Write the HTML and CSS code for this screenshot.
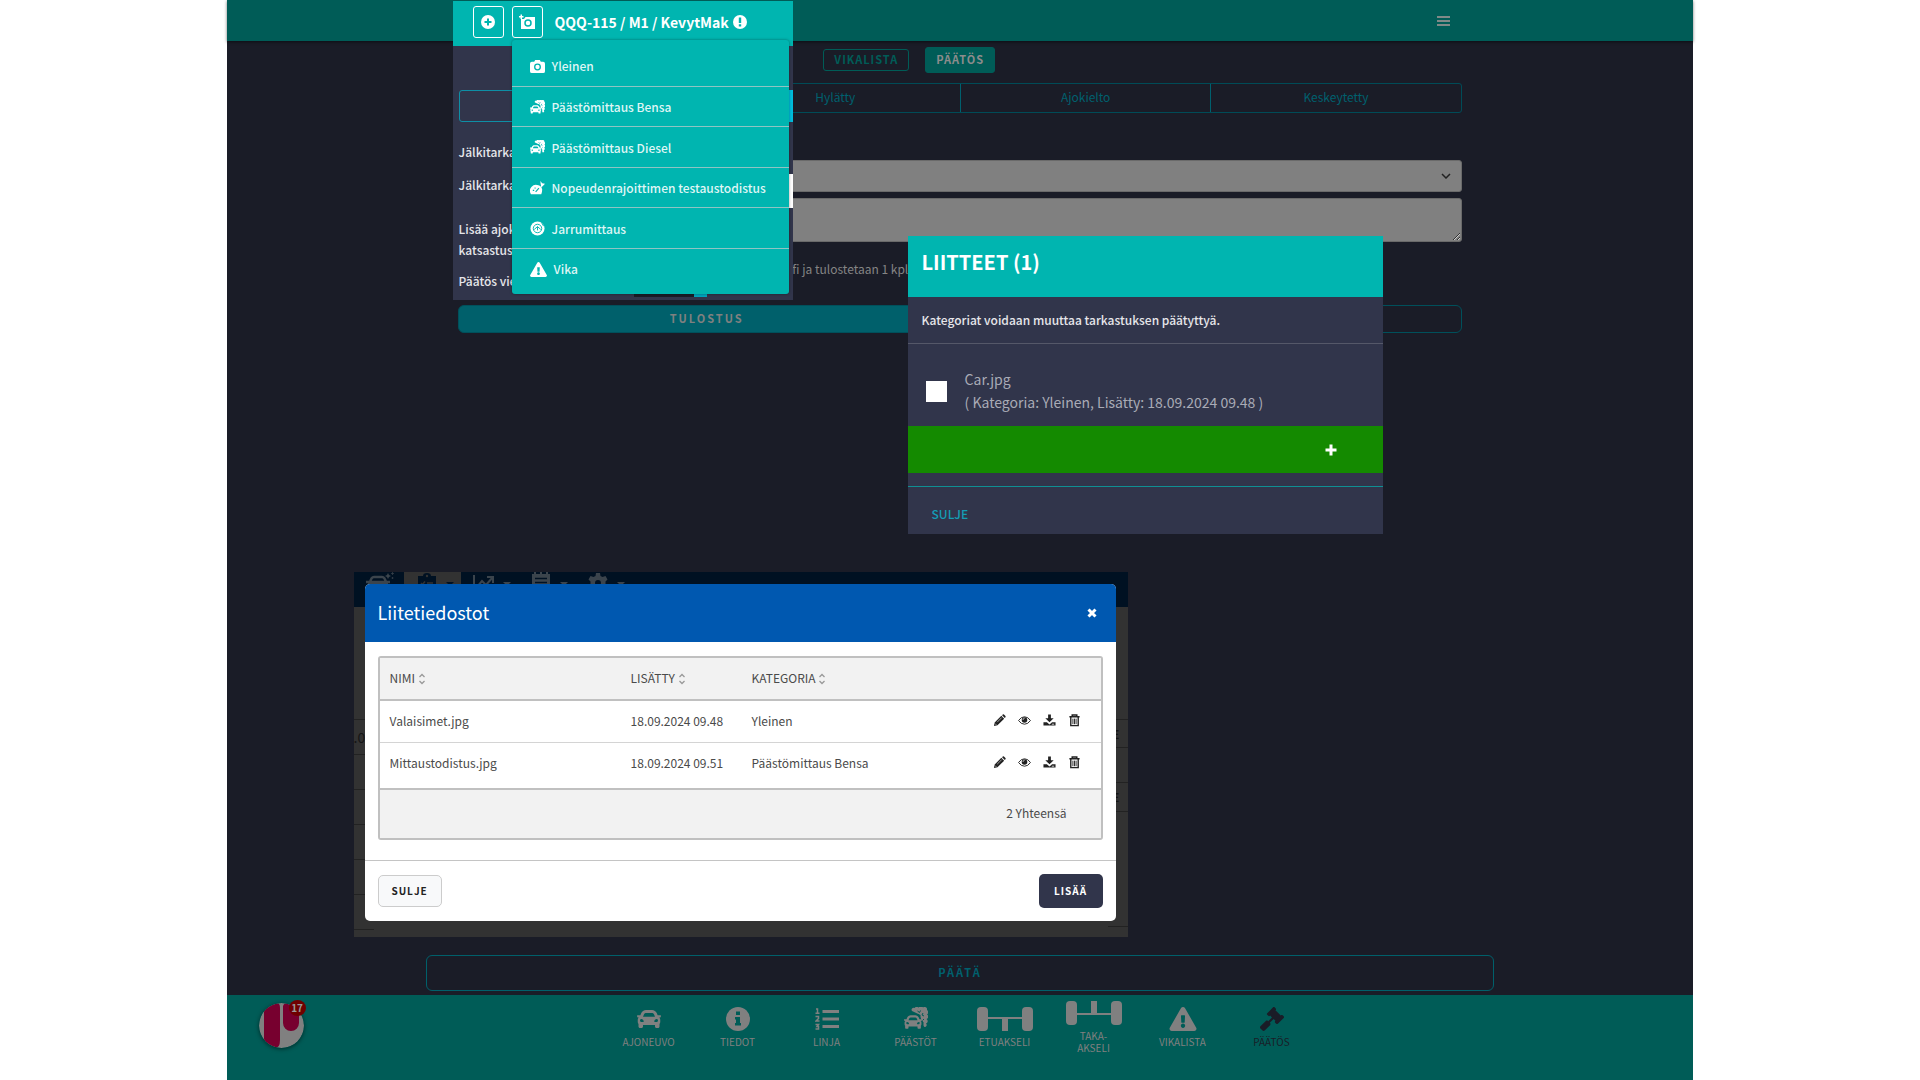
FILE: index.html
```html
<!DOCTYPE html>
<html lang="fi">
<head>
<meta charset="utf-8">
<meta name="viewport" content="width=device-width, initial-scale=1">
<title>Katsastus – Päätös</title>
<link rel="stylesheet" href="styles.css">
</head>
<body>
<svg class="sprite" aria-hidden="true">
  <symbol id="car" viewBox="0 0 512 512"><path d="M499.99 176h-59.87l-16.64-41.6C406.38 91.63 365.57 64 319.5 64h-127c-46.06 0-86.88 27.63-103.99 70.4L71.87 176H12.01C4.2 176-1.53 183.34.37 190.91l6 24C7.7 220.25 12.5 224 18.01 224h20.07C24.65 235.73 16 252.78 16 272v48c0 16.12 6.16 30.67 16 41.93V416c0 17.67 14.33 32 32 32h32c17.67 0 32-14.33 32-32v-32h256v32c0 17.67 14.33 32 32 32h32c17.67 0 32-14.33 32-32v-54.07c9.84-11.25 16-25.8 16-41.93v-48c0-19.22-8.65-36.27-22.07-48H494c5.51 0 10.31-3.75 11.64-9.09l6-24c1.89-7.57-3.84-14.91-11.65-14.91zm-352.06-17.83c7.29-18.22 24.94-30.17 44.57-30.17h127c19.63 0 37.28 11.95 44.57 30.17L384 208H128l19.93-49.83zM96 319.8c-19.2 0-32-12.76-32-31.9S76.8 256 96 256s48 28.71 48 47.85-28.8 15.95-48 15.95zm320 0c-19.2 0-48 3.19-48-15.95S396.8 256 416 256s32 12.76 32 31.9-12.8 31.9-32 31.9z"/></symbol>
  <symbol id="smog" viewBox="0 0 24 24"><path d="M8 4a2 2 0 0 1 2.500-3 2.500 2.500 0 0 1 4-.3 2.500 2.500 0 0 1 4.500-.2 2.500 2.500 0 0 1 4 2.500 2.800 2.800 0 0 1 0 4.500 2.500 2.500 0 0 1-.5 4.500 2.500 2.500 0 0 1-.5 4.500 2 2 0 0 1-1.500 3.500l-4-4V8z"/><path d="M13.500 4l2 1.500 1-2M19 6l-1 2 2 1M20 12l-1.500 1.500" stroke="var(--cut)" fill="none"/><path d="M3 14l2.500-6.500h9L17.500 14l1.500 1v6" fill="var(--cut)" stroke="var(--cut)"/><use href="#car" x="0" y="5" width="18" height="20"/></symbol>
  <symbol id="warning" viewBox="0 0 576 512"><path d="M569.517 440.013C587.975 472.007 564.806 512 527.94 512H48.054c-36.937 0-59.999-40.055-41.577-71.987L246.423 23.985c18.467-32.009 64.72-31.951 83.154 0l239.94 416.028zM288 354c-25.405 0-46 20.595-46 46s20.595 46 46 46 46-20.595 46-46-20.595-46-46-46zm-43.673-165.346l7.418 136c.347 6.364 5.609 11.346 11.982 11.346h48.546c6.373 0 11.635-4.982 11.982-11.346l7.418-136c.375-6.874-5.098-12.654-11.982-12.654h-63.383c-6.884 0-12.356 5.78-11.981 12.654z"/></symbol>
  <symbol id="pencil" viewBox="0 0 14 14"><path d="M1 13l.8-3.800L9 2l3 3-7.200 7.200zM9.800 1.300l.7-.7q.7-.5 1.300 0l1.600 1.600q.5.700 0 1.300l-.7.700z"/><path d="M2.200 10.300l1.500 1.500M4.500 8.800L9.500 3.800" stroke="var(--cut)" stroke-width=".6"/></symbol>
  <symbol id="eye" viewBox="0 0 14 14"><path d="M.6 7Q3.200 3 7 3t6.400 4Q10.800 11 7 11T.6 7z" fill="none" stroke="currentColor"/><circle cx="7" cy="6.500" r="3"/><path d="M5.300 6.300A1.800 1.800 0 0 1 7 4.700" stroke="var(--cut)" stroke-width=".8" fill="none"/></symbol>
  <symbol id="download" viewBox="0 0 14 14"><path d="M5.500.5h3v4h3L7 9 2.500 4.500h3zM.5 9h3.700L7 11.200 9.800 9h3.700v3.500H.5z"/><path d="M9.500 11h2.500" stroke="var(--cut)" stroke-width=".8"/></symbol>
  <symbol id="trash" viewBox="0 0 14 14"><path d="M4.500 2.500V1h5v1.500M1.500 3h11M3 3.500v9h8v-9" fill="none" stroke="currentColor" stroke-width="1.500"/><path d="M5.300 5v6M7 5v6M8.700 5v6" stroke="currentColor" stroke-width="1"/></symbol>
  <symbol id="sort" viewBox="0 0 8 12"><path d="M1.500 4L4 1.500 6.500 4M1.500 8L4 10.500 6.500 8" fill="none" stroke="currentColor" stroke-width="1.300"/></symbol>
</svg>

<div class="stage">
  <header class="topbar">
    <button class="menu-button" type="button" aria-label="Valikko"><span></span><span></span><span></span></button>
  </header>

  <main class="content">
    <div class="decision">
      <nav class="tabs">
        <button class="tab" type="button">VIKALISTA</button>
        <button class="tab tab-active" type="button">PÄÄTÖS</button>
      </nav>
      <div class="segments">
        <button type="button" aria-label="Hyväksytty"></button>
        <button type="button">Hylätty</button>
        <button type="button">Ajokielto</button>
        <button type="button">Keskeytetty</button>
      </div>
      <div class="fields">
        <select class="field" aria-label="Jälkitarkastus"></select>
        <textarea class="field" aria-label="Lisätiedot"></textarea>
      </div>
      <p class="print-note">fi ja tulostetaan 1 kpl</p>
      <div class="print-actions">
        <button class="print-button print-main" type="button">TULOSTUS</button>
        <button class="print-button" type="button" aria-label="Lähetä"></button>
      </div>
    </div>
    <button class="finish" type="button">PÄÄTÄ</button>
  </main>

  <footer class="bottombar">
    <a class="brand" href="#" aria-label="Etusivu">
      <svg viewBox="0 0 45 45"><defs><clipPath id="disc"><circle cx="22.500" cy="22.500" r="22.500"/></clipPath></defs><g clip-path="url(#disc)"><path fill="#808080" d="M0 0h45v45H0z"/><path fill="#77002f" d="M5 0h13q3 0 3 5v32q0 8-5 8H5zM24 3q1-3 4-3h12v20a8 8 0 0 1-16 0z"/></g></svg>
      <span class="count">17</span>
    </a>
    <nav class="steps">
      <a href="#"><svg class="icon-24" viewBox="0 0 512 512"><use href="#car"/></svg>AJONEUVO</a>
      <a href="#"><svg class="icon-24" viewBox="0 0 24 24"><circle cx="12" cy="12" r="12"/><path fill="#005c57" d="M10 4.500h4v3.500h-4zM9 10h5v6h1v2.500H9V16h1v-3.500H9z"/></svg>TIEDOT</a>
      <a href="#"><svg class="icon-24" viewBox="0 0 24 24"><path d="M7.500 3H24v3H7.500zM7.500 10.500H24v3H7.500zM7.500 18H24v3H7.500z"/><path fill="none" stroke="currentColor" stroke-width="1.500" d="M1 2h1.500V6M.5 6.300h4M.5 9.500h3v2l-2.500 2.500h3.500M.5 17.500h3L2 19.500h1.500v2.500h-3"/></svg>LINJA</a>
      <a href="#"><svg class="icon-24"><use href="#smog"/></svg>PÄÄSTÖT</a>
      <a href="#"><svg class="axle" viewBox="0 0 56 24"><rect width="11" height="24" rx="4"/><rect x="45" width="11" height="24" rx="4"/><path d="M10 10h36v2H10zM25 11h6v13h-6z"/></svg>ETUAKSELI</a>
      <a class="rear" href="#"><svg class="axle" viewBox="0 0 56 24"><rect width="11" height="24" rx="4"/><rect x="45" width="11" height="24" rx="4"/><path d="M10 12h36v2H10zM25 0h6v13h-6z"/></svg><span>TAKA-<br>AKSELI</span></a>
      <a href="#"><svg class="icon-27"><use href="#warning"/></svg>VIKALISTA</a>
      <a class="current" href="#"><svg class="icon-24" viewBox="0 0 512 512"><path d="M504.971 199.362l-22.627-22.627c-9.373-9.373-24.569-9.373-33.941 0l-5.657 5.657L329.608 69.255l5.657-5.657c9.373-9.373 9.373-24.569 0-33.941L312.638 7.029c-9.373-9.373-24.569-9.373-33.941 0L154.246 131.480c-9.373 9.373-9.373 24.569 0 33.941l22.627 22.627c9.373 9.373 24.569 9.373 33.941 0l5.657-5.657 39.598 39.598-81.040 81.040-5.657-5.657c-12.497-12.497-32.758-12.497-45.255 0L9.373 412.118c-12.497 12.497-12.497 32.758 0 45.255l45.255 45.255c12.497 12.497 32.758 12.497 45.255 0l114.745-114.745c12.497-12.497 12.497-32.758 0-45.255l-5.657-5.657 81.040-81.040 39.598 39.598-5.657 5.657c-9.373 9.373-9.373 24.569 0 33.941l22.627 22.627c9.373 9.373 24.569 9.373 33.941 0l124.451-124.451c9.372-9.372 9.372-24.568 0-33.941z"/></svg>PÄÄTÖS</a>
    </nav>
  </footer>

  <!-- Vehicle panel with the photo category menu -->
  <section class="vehicle">
    <div class="vehicle-head">
      <button class="head-button" type="button" aria-label="Lisää"><svg viewBox="0 0 14 14"><circle cx="7" cy="7" r="7"/><path stroke="#00b5b0" stroke-width="2" d="M7 3.500v7M3.500 7h7"/></svg></button>
      <button class="head-button" type="button" aria-label="Lisää kuva"><svg class="icon-16" viewBox="0 0 16 16"><path d="M2 5h3l1.500-2H16v12H2zM0 2h1.500V.5H3V2h1.500v1.500H3V5H1.500V3.500H0z"/><circle cx="9" cy="9" r="3" fill="none" stroke="#00b5b0" stroke-width="1.500"/></svg></button>
      <h1>QQQ-115 / M1 / KevytMak <svg viewBox="0 0 14 14"><circle cx="7" cy="7" r="7"/><path fill="#00b5b0" d="M5.800 2.500h2.400v5.500H5.800zM5.800 9.200h2.400v2.300H5.800z"/></svg></h1>
    </div>
    <div class="vehicle-body">
      <div class="result"><span></span><span class="chosen"></span></div>
      <p>Jälkitarka</p>
      <p class="with-field">Jälkitarka<span class="white-field"></span></p>
      <p class="spaced">Lisää ajok<br>katsastus</p>
      <p class="spaced">Päätös vie</p>
      <div class="language"><span></span><span class="chosen"></span></div>
    </div>
    <ul class="photo-menu">
      <li><a href="#"><svg viewBox="0 0 16 16"><path d="M2 3h2.500l1-2h5l1 2H14q2 0 2 2v8q0 2-2 2H2q-2 0-2-2V5q0-2 2-2z"/><circle cx="8" cy="8.500" r="3" fill="none" stroke="#00b5b0" stroke-width="1.400"/></svg>Yleinen</a></li>
      <li><a href="#"><svg><use href="#smog"/></svg>Päästömittaus Bensa</a></li>
      <li><a href="#"><svg><use href="#smog"/></svg>Päästömittaus Diesel</a></li>
      <li><a href="#"><svg viewBox="0 0 16 16"><path d="M1 14a6.500 6.500 0 0 1 8-9.500q3 .5 4 4.500 0 3-1 5zM11 0l2 2.500 3 .5-1.500 1.500L12 7l-.5-3z"/><path stroke="#00b5b0" stroke-width="1.200" fill="none" d="M6 11.500l3.500-4M3 10h1.500M5 7l.8 1"/></svg>Nopeudenrajoittimen testaustodistus</a></li>
      <li><a href="#"><svg viewBox="0 0 16 16"><circle cx="8" cy="8" r="7.500"/><circle cx="8" cy="8" r="4.500" fill="none" stroke="#00b5b0"/><path stroke="#00b5b0" fill="none" d="M4.500 9L8 6l3.500 3M8 6v4M12.500 2l2 3.500"/></svg>Jarrumittaus</a></li>
      <li><a href="#"><svg class="wide"><use href="#warning"/></svg>Vika</a></li>
    </ul>
  </section>

  <!-- Attachments dialog -->
  <section class="attachments">
    <h2>LIITTEET (1)</h2>
    <p class="hint">Kategoriat voidaan muuttaa tarkastuksen päätyttyä.</p>
    <label class="file"><input type="checkbox"><span>Car.jpg<br>( Kategoria: Yleinen, Lisätty: 18.09.2024 09.48 )</span></label>
    <button class="add-file" type="button" aria-label="Lisää liite"><svg viewBox="0 0 12 12"><path d="M4.500.5h3v4h4v3h-4v4h-3v-4h-4v-3h4z"/></svg></button>
    <div class="attachments-foot"><button type="button">SULJE</button></div>
  </section>

  <!-- Office view with the attachment list on top -->
  <section class="office">
    <div class="office-bar">
      <span class="office-tool"><svg class="office-car" viewBox="0 0 28 24"><path fill="none" stroke="currentColor" stroke-width="2.500" d="M4 11q1-6 4-6h8q3 0 4 6M0 10h24"/><path d="M2 10h20v10H2zM22 1l1 2 2 1-2 1-1 2-1-2-2-1 2-1z"/><path d="M26.500 0v3M25 1.500h3M26.500 5v2M25.500 6h2" stroke="currentColor" stroke-width=".7"/></svg></span>
      <span class="office-tool office-open"><svg viewBox="0 0 22 24"><path d="M2 4h5q0-3 4-3t4 3h5v19H2z"/><path fill="none" stroke="#323232" stroke-width="1.500" d="M5 11l1.500 1.500L9 9.500M11 11h6"/><circle cx="11" cy="4" r="1.200" fill="#323232"/></svg><i></i></span>
      <span class="office-tool"><svg viewBox="0 0 22 24"><path fill="none" stroke="currentColor" stroke-width="2" d="M1 3v18h20M4 15l5-6 4 4 7-8M14 5h6v6"/></svg><i></i></span>
      <span class="office-tool"><svg viewBox="0 0 22 24"><path d="M2 2h2V0h2v2h4V0h2v2h4V0h2v2h2v22H2z"/><path stroke="#001122" stroke-width="1.500" d="M5 6.500h12M5 10.500h12"/></svg><i></i></span>
      <span class="office-tool"><svg viewBox="0 0 22 24"><path d="M9 1h4l.5 3 2 1 3-1 2 3.500-2 2v3l2 2-2 3.500-3-1-2 1-.5 3H9l-.5-3-2-1-3 1-2-3.500 2-2v-3l-2-2L3.500 4l3 1 2-1z"/><circle cx="11" cy="11" r="3" fill="#001122"/></svg><i></i></span>
    </div>
    <div class="office-body">
      <div class="office-left"><span></span><span>.0</span><span></span><span></span><span></span><span></span><span></span></div>
      <div class="office-right"><span></span><span>E</span><span></span><span>E</span><span></span></div>
    </div>

    <div class="dialog">
      <div class="dialog-head">
        <h2>Liitetiedostot</h2>
        <button type="button" aria-label="Sulje"><svg viewBox="0 0 10 10"><path stroke="currentColor" stroke-width="3" d="M1.500 1.500l7 7M8.500 1.500l-7 7"/></svg></button>
      </div>
      <div class="dialog-body">
        <table class="files">
          <thead>
            <tr><th>NIMI <svg><use href="#sort"/></svg></th><th>LISÄTTY <svg><use href="#sort"/></svg></th><th>KATEGORIA <svg><use href="#sort"/></svg></th><th></th></tr>
          </thead>
          <tbody>
            <tr><td>Valaisimet.jpg</td><td>18.09.2024 09.48</td><td>Yleinen</td><td><div class="row-tools"><button type="button" aria-label="Muokkaa"><svg><use href="#pencil"/></svg></button><button type="button" aria-label="Näytä"><svg><use href="#eye"/></svg></button><button type="button" aria-label="Lataa"><svg><use href="#download"/></svg></button><button type="button" aria-label="Poista"><svg><use href="#trash"/></svg></button></div></td></tr>
            <tr><td>Mittaustodistus.jpg</td><td>18.09.2024 09.51</td><td>Päästömittaus Bensa</td><td><div class="row-tools"><button type="button" aria-label="Muokkaa"><svg><use href="#pencil"/></svg></button><button type="button" aria-label="Näytä"><svg><use href="#eye"/></svg></button><button type="button" aria-label="Lataa"><svg><use href="#download"/></svg></button><button type="button" aria-label="Poista"><svg><use href="#trash"/></svg></button></div></td></tr>
          </tbody>
          <tfoot>
            <tr><td colspan="4">2 Yhteensä</td></tr>
          </tfoot>
        </table>
      </div>
      <div class="dialog-foot">
        <button class="plain" type="button">SULJE</button>
        <button class="primary" type="button">LISÄÄ</button>
      </div>
    </div>
  </section>
</div>
</body>
</html>
```
FILE: styles.css
```css
* { box-sizing: border-box; }

body {
  margin: 0;
  background: #fff;
  font-family: "Noto Sans CJK JP", "Noto Sans", sans-serif;
  font-size: 12px;
  line-height: 16px;
}

h1, h2, p, ul { margin: 0; padding: 0; }
ul { list-style: none; }
a { color: inherit; text-decoration: none; }
svg { fill: currentColor; }
.sprite { position: absolute; width: 0; height: 0; }

button {
  margin: 0;
  padding: 0;
  border: 0;
  background: none;
  color: inherit;
  font: inherit;
}

.stage {
  position: relative;
  display: flex;
  flex-direction: column;
  width: 76.4%;
  min-height: 100vh;
  margin: 0 auto;
  background: #1a1c27;
}

/* Top bar */
.topbar {
  display: flex;
  justify-content: flex-end;
  align-items: center;
  height: 41px;
  padding-right: 243px;
  background: #005c57;
  box-shadow: 0 1px 3px #0008;
}
.menu-button { display: grid; gap: 2px; width: 13px; }
.menu-button span { height: 2px; background: #808a88; }

/* Decision form */
.content { display: flex; flex: 1; flex-direction: column; align-items: center; justify-content: space-between; }
.decision { width: 68.4%; padding-top: 6px; }

.tabs { display: flex; align-items: center; gap: 16px; height: 26px; padding-left: 365px; }
.tab {
  height: 22px;
  padding: 0 10px 2px;
  border: 1px solid #005c57;
  border-radius: 3px;
  color: #005c57;
  font-size: 11px;
  font-weight: 700;
  letter-spacing: 1px;
  line-height: 18px;
}
.tab-active { height: 26px; background: #005c57; color: #8c8c8c; }

.segments {
  display: grid;
  grid-template-columns: repeat(4, 1fr);
  height: 30px;
  margin-top: 10px;
  border: 1px solid #004b57;
  border-radius: 3px;
  color: #00606e;
}
.segments button { padding-bottom: 2px; }
.segments button + button { border-left: 1px solid #00606e; }

.fields { display: grid; gap: 6px; margin-top: 47px; padding-left: 194px; }
.field {
  display: block;
  width: 100%;
  margin: 0;
  border: 1px solid #6a6a6a;
  border-radius: 3px;
  background: #808080;
}
select.field {
  height: 32px;
  appearance: none;
  background: #808080 url("data:image/svg+xml,%3Csvg xmlns='http://www.w3.org/2000/svg' viewBox='0 0 10 6'%3E%3Cpath d='M1 1l4 4 4-4' fill='none' stroke='%23222' stroke-width='1.5'/%3E%3C/svg%3E") no-repeat right 10px center / 10px 6px;
}
textarea.field { height: 44px; }

.print-note { margin-top: 19px; padding-left: 334px; color: #858585; }
.print-actions { display: grid; grid-template-columns: 1fr 1fr; gap: 10px; margin-top: 28px; }
.print-button {
  height: 28px;
  padding-bottom: 2px;
  border: 1px solid #00505b;
  border-radius: 6px;
  font-size: 11px;
  font-weight: 700;
  letter-spacing: 2px;
}
.print-main { background: #00606b; color: #808080; }

.finish {
  width: 72.8%;
  height: 36px;
  margin-bottom: 4px;
  padding-bottom: 2px;
  border: 1px solid #00606b;
  border-radius: 6px;
  color: #00606e;
  font-size: 11px;
  font-weight: 700;
  letter-spacing: 2px;
}

/* Bottom bar */
.bottombar {
  display: grid;
  grid-template-columns: 1fr auto 1fr;
  height: 85px;
  background: #005c57;
  color: #808080;
}
.brand { position: relative; width: 45px; height: 45px; margin: 8px 0 0 32px; }
.brand svg { display: block; width: 45px; height: 45px; border-radius: 50%; box-shadow: 0 1px 4px #0008; }
.count {
  position: absolute;
  top: -3px;
  right: -2px;
  width: 17px;
  height: 16px;
  border-radius: 50%;
  background: #700000;
  color: #999;
  font-size: 10px;
  font-weight: 700;
  line-height: 16px;
  text-align: center;
}
.steps { display: flex; padding-top: 12px; font-size: 10px; line-height: 12px; }
.steps a { display: flex; flex-direction: column; align-items: center; gap: 5px; width: 89px; text-align: center; --cut: #005c57; }
.steps .rear { margin-top: -6px; }
.steps .current { color: #1a1c27; }
.icon-24 { width: 24px; height: 24px; }
.icon-27 { width: 28px; height: 24px; }
.axle { width: 56px; height: 24px; }

/* Vehicle panel */
.vehicle {
  position: absolute;
  top: 1px;
  left: 226px;
  width: 340px;
  height: 299px;
  background: #31354b;
  color: #e6e6ea;
}
.vehicle-head {
  display: flex;
  align-items: center;
  gap: 8px;
  height: 45px;
  padding: 0 20px 3px;
  background: #00b5b0;
  color: #fff;
}
.head-button {
  display: flex;
  align-items: center;
  justify-content: center;
  width: 31px;
  height: 32px;
  border: 1px solid #fff;
  border-radius: 3px;
}
.head-button svg { width: 14px; height: 14px; }
.head-button .icon-16 { width: 16px; height: 16px; }
.vehicle h1 { display: flex; align-items: center; gap: 4px; margin-left: 4px; font-size: 14px; line-height: 20px; white-space: nowrap; }
.vehicle h1 svg { width: 14px; height: 14px; }

.vehicle-body { padding-left: 6px; font-size: 12px; font-weight: 500; line-height: 21px; }
.result { display: flex; height: 32px; margin: 44px 0 19px; }
.result span { flex: 1; border: 1px solid #0e8fa6; border-radius: 3px 0 0 3px; }
.result .chosen { border: 0; border-radius: 0; background: #00bcdc; }
.with-field { display: flex; height: 34px; margin-top: 12px; }
.white-field { flex: 1; height: 34px; margin-left: 120px; background: #fff; }
.spaced { margin-top: 10px; }
.vehicle-body .spaced { margin-top: 10px; }
.language { display: flex; justify-content: flex-end; height: 5px; margin-top: 1px; padding-right: 86px; }
.language span { width: 60px; background: #1a1c27; }
.language .chosen { width: 13px; background: #00a3bd; }

.photo-menu {
  position: absolute;
  top: 39px;
  left: 59px;
  display: grid;
  grid-auto-rows: 1fr;
  width: 277px;
  height: 254px;
  padding: 5px 0 6px;
  border-radius: 3px;
  background: #00b5b0;
  box-shadow: 0 0 3px #0006;
  color: #dff6f5;
  font-size: 12px;
  font-weight: 500;
  --cut: #00b5b0;
}
.photo-menu li + li { border-top: 1px solid #8fc4c3; }
.photo-menu a { display: flex; align-items: center; gap: 7px; height: 100%; padding: 2px 0 0 18px; white-space: nowrap; }
.photo-menu svg { width: 15px; height: 15px; color: #fff; }
.photo-menu .wide { width: 17px; }

/* Attachments dialog */
.attachments {
  position: absolute;
  top: 236px;
  left: 681px;
  width: 475px;
  background: #31354b;
  color: #e6e6ea;
}
.attachments h2 { height: 61px; padding: 11px 14px; background: #00b5b0; color: #fff; font-size: 20px; line-height: 30px; }
.hint { height: 47px; padding: 14px 14px; border-bottom: 1px solid #555869; font-weight: 500; line-height: 18px; }
.file { display: flex; align-items: center; gap: 18px; padding: 24px 18px 12px; color: #a9abb6; font-size: 14px; line-height: 23px; }
.file input { appearance: none; width: 21px; height: 21px; margin: 0; background: #fff; }
.add-file { display: flex; align-items: center; justify-content: flex-end; width: 100%; height: 47px; padding-right: 46px; background: #148a00; color: #fff; }
.add-file svg { width: 12px; height: 12px; }
.attachments-foot { height: 48px; margin-top: 13px; padding: 17px 24px; border-top: 1px solid #0f8f93; color: #149db5; font-weight: 500; line-height: 20px; }

/* Office view */
.office {
  position: absolute;
  top: 572px;
  left: 127px;
  display: flex;
  flex-direction: column;
  width: 774px;
  height: 365px;
  overflow: hidden;
  background: #323232;
}
.office-bar { display: flex; height: 35px; background: #001122; color: #3b444c; }
.office-tool { display: flex; gap: 8px; width: 57px; padding-left: 12px; }
.office-tool:first-child { width: 50px; }
.office-tool svg { width: 22px; height: 24px; }
.office-tool .office-car { width: 28px; }
.office-tool i { width: 0; height: 0; margin-top: 10px; border: 4px solid transparent; border-top-color: currentColor; }
.office-tool:first-child i { display: none; }
.office-open { background: #323232; color: #001122; }
.office-body { display: flex; flex: 1; justify-content: space-between; color: #151515; }
.office-left, .office-right { display: grid; grid-auto-rows: 35px; align-content: start; width: 20px; line-height: 34px; font-size: 14px; }
.office-left { grid-template-rows: 113px; }
.office-right { grid-template-rows: 113px 28px 35px 29px 115px; font-size: 11px; line-height: 28px; }
.office-body span { border-bottom: 1px solid #222; }
.office-right span { padding-left: 4px; }
.office-right span:nth-child(even) { padding-left: 5px; font-weight: 700; }

.dialog {
  position: absolute;
  inset: 12px 12px 16px 11px;
  display: flex;
  flex-direction: column;
  overflow: hidden;
  border-radius: 5px;
  background: #fff;
  color: #4a4a4a;
}
.dialog-head { display: flex; align-items: center; justify-content: space-between; height: 58px; padding: 0 19px 0 13px; background: #0058b0; color: #fff; }
.dialog-head h2 { padding-bottom: 2px; font-size: 18px; font-weight: 400; line-height: 24px; }
.dialog-head button { display: flex; }
.dialog-head svg { width: 10px; height: 10px; }
.dialog-body { flex: 1; padding: 14px 13px 0; }

.files {
  width: 100%;
  table-layout: fixed;
  border: 2px solid #c0c0c0;
  border-radius: 3px;
  border-spacing: 0;
  --cut: #fff;
}
.files th, .files td { padding: 0 0 2px 10px; text-align: left; font-weight: 400; white-space: nowrap; }
.files th:nth-child(1) { width: 241px; }
.files th:nth-child(2) { width: 121px; }
.files th:nth-child(3) { width: 241px; }
.files th { height: 43px; border-bottom: 2px solid #c0c0c0; background: #f2f2f2; }
.files th svg { width: 8px; height: 12px; color: #999; vertical-align: -2px; }
.files tbody td { height: 41px; }
.files tbody tr:last-child td { height: 46px; padding-bottom: 6px; border-top: 1px solid #d4d4d4; }
.files tfoot td { height: 50px; padding-right: 34px; border-top: 2px solid #c0c0c0; background: #f2f2f2; text-align: right; }
.row-tools { display: flex; gap: 12px; color: #222; }
.row-tools button { display: flex; }
.row-tools svg { width: 13px; height: 13px; }

.dialog-foot { display: flex; align-items: center; justify-content: space-between; height: 61px; padding: 0 13px; border-top: 1px solid #c4c4c4; }
.dialog-foot button { width: 64px; height: 32px; border-radius: 5px; font-size: 10px; font-weight: 700; letter-spacing: 1px; }
.dialog-foot .plain { border: 1px solid #ccc; background: #f8f9fa; color: #222; }
.dialog-foot .primary { height: 34px; background: #31354b; color: #fff; }
```
